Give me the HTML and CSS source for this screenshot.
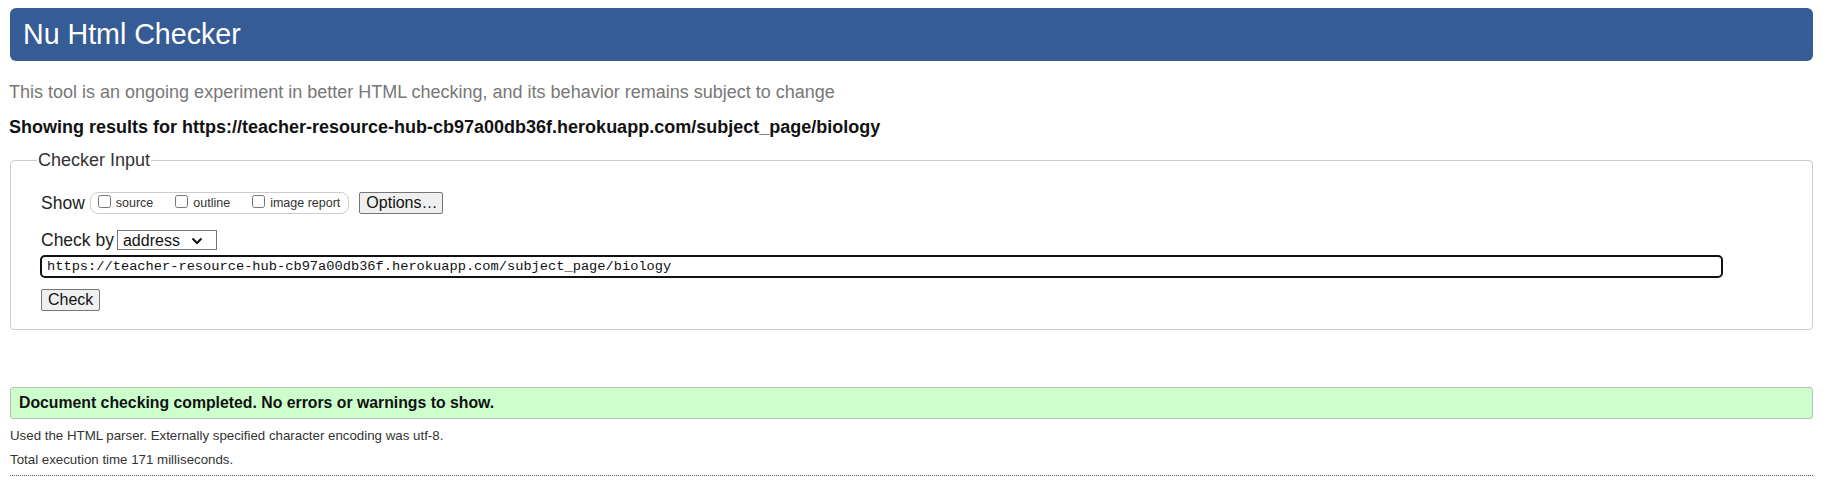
FILE: index.html
```html
<!DOCTYPE html>
<html lang="en">
<head>
<meta charset="utf-8">
<title>Nu Html Checker</title>
<link rel="stylesheet" href="styles.css">
</head>
<body>
<div class="page">
  <h1 class="banner">Nu Html Checker</h1>
  <p class="intro">This tool is an ongoing experiment in better HTML checking, and its behavior remains subject to change</p>
  <p class="showing">Showing results for https://teacher-resource-hub-cb97a00db36f.herokuapp.com/subject_page/biology</p>
  <fieldset class="checker">
    <legend class="legend">Checker Input</legend>
    <div class="row row-show">
      <span class="label">Show</span>
      <span class="opts">
        <label class="opt"><input type="checkbox" class="cb">source</label>
        <label class="opt"><input type="checkbox" class="cb">outline</label>
        <label class="opt"><input type="checkbox" class="cb">image report</label>
      </span>
      <button class="btn btn-options" type="button">Options…</button>
    </div>
    <div class="row row-by">
      <span class="label">Check by</span>
      <span class="sel-wrap">
        <select class="sel"><option>address</option></select>
        <svg class="chev" width="12" height="8" viewBox="0 0 12 8" aria-hidden="true"><path d="M1.5 1.5 L6 6 L10.5 1.5" fill="none" stroke="#111" stroke-width="2"/></svg>
      </span>
    </div>
    <div class="row row-url">
      <input class="url" type="text" value="https://teacher-resource-hub-cb97a00db36f.herokuapp.com/subject_page/biology">
    </div>
    <div class="row row-check">
      <button class="btn btn-check" type="button">Check</button>
    </div>
  </fieldset>
  <p class="success">Document checking completed. No errors or warnings to show.</p>
  <p class="note">Used the HTML parser. Externally specified character encoding was utf-8.</p>
  <p class="note">Total execution time 171 milliseconds.</p>
  <hr class="rule">
</div>
</body>
</html>
```
FILE: styles.css
```css
html, body {
  margin: 0;
  padding: 0;
  background: #fff;
}
body {
  font-family: "Liberation Sans", Arial, sans-serif;
  color: #222;
}
.page {
  padding: 8px 15px 0 10px;
}
.banner {
  margin: 0;
  height: 53px;
  display: flex;
  align-items: center;
  padding-left: 13px;
  background: #365c96;
  color: #fff;
  font-weight: normal;
  font-size: 28.6px;
  border-radius: 6px;
}
.intro {
  margin: 20px 0 0 -1px;
  font-size: 18px;
  line-height: 22px;
  color: #777;
}
.showing {
  margin: 13px 0 0 -1px;
  font-size: 18px;
  line-height: 22px;
  font-weight: bold;
  color: #111;
}
.checker {
  margin: 12px 0 0 0;
  padding: 20px 0 18px 30px;
  border: 1px solid #ccc;
  border-radius: 4px;
  min-width: 0;
}
.legend {
  padding: 0 1px;
  margin-left: -4px;
  font-size: 18px;
  color: #333;
}
.row {
  display: flex;
  align-items: center;
}
.label {
  font-size: 17.5px;
  color: #222;
}
.row-show {
  height: 24px;
}
.opts {
  display: flex;
  align-items: center;
  height: 20px;
  margin-left: 5px;
  padding: 0 8px 0 7px;
  border: 1px solid #ccc;
  border-radius: 8px;
}
.opt {
  display: flex;
  align-items: center;
  font-size: 12.5px;
  color: #333;
  margin-right: 22px;
}
.opt:last-child {
  margin-right: 0;
}
.cb {
  margin: 0 5px 3px 0;
  width: 13px;
  height: 13px;
}
.btn {
  font-family: "Liberation Sans", Arial, sans-serif;
  font-size: 16px;
  color: #111;
  background: #efefef;
  border: 1px solid #767676;
  border-radius: 2px;
  padding: 0 6px;
  height: 22px;
}
.btn-options {
  margin-left: 10px;
  width: 84px;
}
.row-by {
  margin-top: 15px;
  height: 20px;
}
.sel-wrap {
  position: relative;
  display: inline-flex;
  margin-left: 3px;
}
.sel {
  appearance: none;
  -webkit-appearance: none;
  width: 100px;
  height: 20px;
  font-family: "Liberation Sans", Arial, sans-serif;
  font-size: 16px;
  border: 1px solid #767676;
  border-radius: 0;
  background: #fff;
  color: #111;
  padding: 0 2px 0 5px;
}
.chev {
  position: absolute;
  right: 14px;
  top: 7px;
  pointer-events: none;
}
.row-url {
  margin-top: 5px;
}
.url {
  width: 1683px;
  height: 23px;
  box-sizing: border-box;
  border: 2px solid #111;
  border-radius: 5px;
  padding: 0 0 0 5px;
  font-family: "Liberation Mono", "DejaVu Sans Mono", monospace;
  font-size: 13.7px;
  color: #111;
  margin-left: -1px;
}
.row-check {
  margin-top: 11px;
}
.btn-check {
  width: 59px;
  height: 22px;
}
.success {
  margin: 57px 0 0 0;
  height: 32px;
  box-sizing: border-box;
  display: flex;
  align-items: center;
  padding-left: 8px;
  background: #ccffcc;
  border: 1px solid #bdbdbd;
  border-radius: 3px;
  font-weight: bold;
  font-size: 15.8px;
  color: #111;
}
.note {
  margin: 9px 0 0 0;
  font-size: 13.3px;
  line-height: 15px;
  color: #333;
}
.rule {
  margin: 8px 0 0 0;
  border: 0;
  border-top: 1px dotted #555;
  height: 0;
}
```
